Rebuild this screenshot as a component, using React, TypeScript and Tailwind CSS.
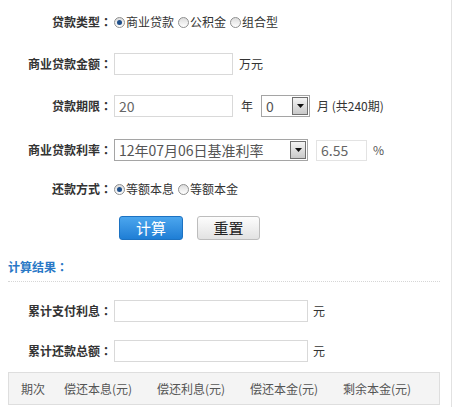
import type { ReactNode } from 'react'

const font = { fontFamily: '"Noto Sans CJK SC", "Liberation Sans", sans-serif' }

function Colon() {
  return <span className="font-['Noto_Sans_CJK_TC',sans-serif]">：</span>
}

function Radio({ checked, label }: { checked?: boolean; label: string }) {
  return (
    <label className="flex items-center">
      <span className="flex h-[11px] w-[11px] items-center justify-center rounded-full border border-[#8e8f8f] bg-gradient-to-b from-[#dcdcdc] to-[#ffffff]">
        {checked && <span className="h-[5px] w-[5px] rounded-full bg-[#1f4f8a]" />}
      </span>
      <span className="ml-[1px]">{label}</span>
    </label>
  )
}

function Select({ value, width }: { value: string; width: string }) {
  return (
    <div className={`flex h-[22px] items-stretch border border-[#a5a5a5] bg-white ${width}`}>
      <span className="flex flex-1 items-center pl-1 text-[14px] text-[#555]">{value}</span>
      <span className="my-[1px] mr-[1px] flex w-[16px] items-center justify-center border border-[#6f6f6f] bg-gradient-to-b from-[#f4f4f4] to-[#c9c9c9]">
        <svg width="7" height="4" viewBox="0 0 7 4">
          <path d="M0 0h7L3.5 4z" fill="#111" />
        </svg>
      </span>
    </div>
  )
}

function Row({ label, children, className = '' }: { label: string; children: ReactNode; className?: string }) {
  return (
    <div className={`flex h-[22px] items-center ${className}`}>
      <span className="w-[104px] text-right font-bold text-[#333]">
        {label}
        <Colon />
      </span>
      <div className="ml-[2px] flex items-center">{children}</div>
    </div>
  )
}

function TextBox({ value = '', width }: { value?: string; width: string }) {
  return (
    <div className={`flex h-[22px] items-center border border-[#d9d9d9] pl-1 text-[14px] text-[#666] ${width}`}>
      {value}
    </div>
  )
}

export default function App() {
  return (
    <div style={font} className="h-[407px] w-[452px] overflow-hidden border-r border-[#e2e2e2] bg-white pl-2 pt-[11px] text-[12px] text-[#333]">
      <Row label="贷款类型">
        <div className="flex items-center gap-[4px]">
          <Radio checked label="商业贷款" />
          <Radio label="公积金" />
          <Radio label="组合型" />
        </div>
      </Row>

      <Row label="商业贷款金额" className="mt-[20px]">
        <TextBox width="w-[119px]" />
        <span className="ml-[6px]">万元</span>
      </Row>

      <Row label="贷款期限" className="mt-[20px]">
        <TextBox value="20" width="w-[119px]" />
        <span className="ml-[8px]">年</span>
        <div className="ml-[8px]">
          <Select value="0" width="w-[49px]" />
        </div>
        <span className="ml-[7px]">月 (共240期)</span>
      </Row>

      <Row label="商业贷款利率" className="mt-[22px]">
        <Select value="12年07月06日基准利率" width="w-[194px]" />
        <div className="ml-[8px] flex h-[21px] w-[51px] items-center border border-[#e3e3e3] pl-1 text-[14px] text-[#666]">
          6.55
        </div>
        <span className="ml-[6px] text-[#555]">%</span>
      </Row>

      <Row label="还款方式" className="mt-[17px]">
        <div className="flex items-center gap-[4px]">
          <Radio checked label="等额本息" />
          <Radio label="等额本金" />
        </div>
      </Row>

      <div className="ml-[111px] mt-[16px] flex gap-[14px]">
        <button className="h-[24px] w-[64px] rounded-[3px] border border-[#1c72c2] bg-gradient-to-b from-[#4ba6ee] to-[#1e7ed5] text-[15px] text-white">
          计算
        </button>
        <button className="h-[24px] w-[63px] rounded-[3px] border border-[#bdbdbd] bg-gradient-to-b from-[#fdfdfd] to-[#e2e2e2] text-[15px] text-[#222]">
          重置
        </button>
      </div>

      <div className="mt-[18px] font-bold text-[#2a78c6]">
        计算结果
        <Colon />
      </div>

      <div className="mr-[11px] mt-[5px] border-t border-dotted border-[#d6d6d6]" />

      <Row label="累计支付利息" className="mt-[18px]">
        <TextBox width="w-[194px]" />
        <span className="ml-[5px]">元</span>
      </Row>

      <Row label="累计还款总额" className="mt-[18px]">
        <TextBox width="w-[194px]" />
        <span className="ml-[5px]">元</span>
      </Row>

      <div className="mr-[11px] mt-[10px] grid h-[33px] grid-cols-[55px_93px_93px_93px_1fr] items-center border border-[#dedede] bg-[#f4f4f4] text-[#555]">
        <span className="pl-3">期次</span>
        <span>偿还本息(元)</span>
        <span>偿还利息(元)</span>
        <span>偿还本金(元)</span>
        <span>剩余本金(元)</span>
      </div>
    </div>
  )
}
